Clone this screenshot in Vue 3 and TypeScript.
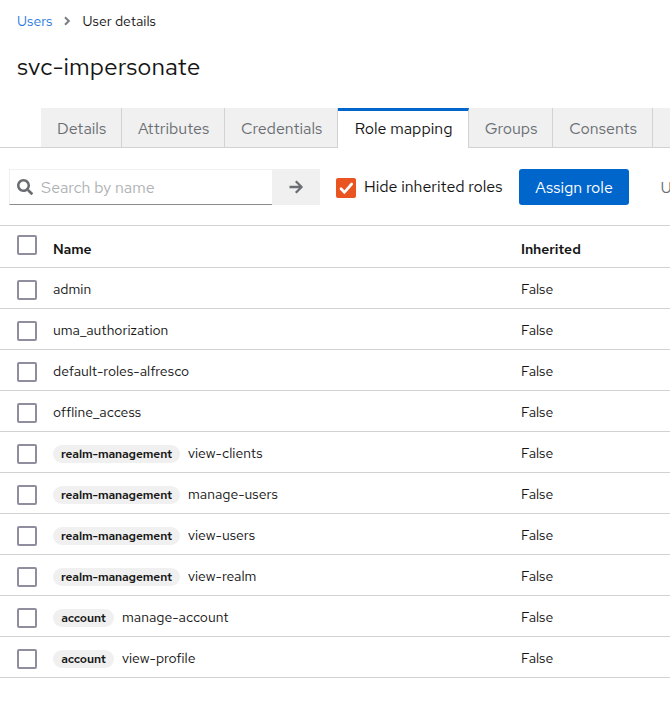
<script setup lang="ts">
import { ref } from 'vue'

interface Tab {
  key: string
  label: string
}

interface Role {
  client?: string
  name: string
  inherited: boolean
}

const tabs: Tab[] = [
  { key: 'details', label: 'Details' },
  { key: 'attributes', label: 'Attributes' },
  { key: 'credentials', label: 'Credentials' },
  { key: 'mapping', label: 'Role mapping' },
  { key: 'groups', label: 'Groups' },
  { key: 'consents', label: 'Consents' },
  { key: 'more', label: '' },
]

const roles: Role[] = [
  { name: 'admin', inherited: false },
  { name: 'uma_authorization', inherited: false },
  { name: 'default-roles-alfresco', inherited: false },
  { name: 'offline_access', inherited: false },
  { client: 'realm-management', name: 'view-clients', inherited: false },
  { client: 'realm-management', name: 'manage-users', inherited: false },
  { client: 'realm-management', name: 'view-users', inherited: false },
  { client: 'realm-management', name: 'view-realm', inherited: false },
  { client: 'account', name: 'manage-account', inherited: false },
  { client: 'account', name: 'view-profile', inherited: false },
]

const activeTab = ref('mapping')
const hideInherited = ref(true)
const search = ref('')
</script>

<template>
  <main class="page">
    <nav class="breadcrumb">
      <a class="crumb-link">Users</a>
      <svg class="chevron" viewBox="0 0 8 10" width="8" height="10">
        <path d="M2 1.2 5.8 5 2 8.8" fill="none" stroke="#7b7f84" stroke-width="2" />
      </svg>
      <span class="crumb">User details</span>
    </nav>

    <h1 class="title">svc-impersonate</h1>

    <div class="tabs">
      <button
        v-for="tab in tabs"
        :key="tab.key"
        class="tab"
        :class="[tab.key, { active: tab.key === activeTab }]"
        @click="activeTab = tab.key"
      >
        {{ tab.label }}
      </button>
    </div>

    <div class="toolbar">
      <div class="search">
        <svg class="search-icon" viewBox="0 0 512 512" width="16" height="16">
          <path
            fill="#6a6e73"
            d="M505 442.700 405.300 343c-4.500-4.500-10.600-7-17-7H372c27.600-35.300 44-79.700 44-128C416 93.100 322.900 0 208 0S0 93.100 0 208s93.100 208 208 208c48.300 0 92.700-16.400 128-44v16.300c0 6.400 2.500 12.500 7 17l99.700 99.700c9.400 9.400 24.600 9.400 33.900 0l28.300-28.300c9.400-9.400 9.400-24.600.1-34zM208 336c-70.700 0-128-57.200-128-128 0-70.700 57.200-128 128-128 70.700 0 128 57.200 128 128 0 70.700-57.200 128-128 128z"
          />
        </svg>
        <input v-model="search" class="search-input" placeholder="Search by name" />
      </div>
      <button class="search-go">
        <svg viewBox="0 0 14 14" width="14" height="14">
          <path d="M0.500 7H12M6.800 1.200 12.600 7 6.800 12.800" fill="none" stroke="#6a6e73" stroke-width="2.300" stroke-linejoin="round" />
        </svg>
      </button>
      <span class="toggle" :class="{ on: hideInherited }" @click="hideInherited = !hideInherited">
        <svg v-if="hideInherited" viewBox="0 0 20 20" width="20" height="20">
          <path d="M5 10.700 8.400 14.300 15.700 6" fill="none" stroke="#fff" stroke-width="2.700" stroke-linecap="round" />
        </svg>
      </span>
      <span class="toggle-label">Hide inherited roles</span>
      <button class="assign">Assign role</button>
      <span class="unassign">U</span>
    </div>

    <div class="table">
      <div class="row head">
        <span class="box"></span>
        <span class="name">Name</span>
        <span class="inherited">Inherited</span>
      </div>
      <div v-for="(role, i) in roles" :key="i" class="row">
        <span class="box"></span>
        <span class="name">
          <span v-if="role.client" class="badge" :class="role.client">{{ role.client }}</span>
          <span>{{ role.name }}</span>
        </span>
        <span class="inherited">{{ role.inherited ? 'True' : 'False' }}</span>
      </div>
    </div>
  </main>
</template>

<style>
body {
  background: #fff;
  overflow: hidden;
}
</style>

<style scoped>
.page {
  width: 670px;
  height: 707px;
  overflow: hidden;
  background: #fff;
  color: #151515;
  font-family: 'Red Hat Text', Inter, 'Noto Sans', sans-serif;
  font-size: 14px;
}

button,
input {
  border: 0;
  padding: 0;
  margin: 0;
  font-family: inherit;
}

.breadcrumb {
  display: flex;
  align-items: center;
  height: 21px;
  padding: 10px 0 1px 17px;
}

.crumb-link {
  width: 46px;
  color: #2b7bdc;
}

.chevron {
  margin-right: 11.5px;
}

.title {
  margin: 17px 0 0 17px;
  height: 35px;
  line-height: 35px;
  font-size: 24.5px;
  font-weight: 450;
}

.tabs {
  display: flex;
  height: 40px;
  margin-top: 24px;
  padding-left: 41px;
  box-shadow: inset 0 -1px #d2d2d2;
}

.tab {
  flex: none;
  box-sizing: border-box;
  height: 40px;
  border-right: 1px solid #d2d2d2;
  border-bottom: 1px solid #d2d2d2;
  padding: 1px 0 0 1.2px;
  background: #f0f0f0;
  color: #6a6e73;
  font-size: 16px;
  font-weight: 400;
  white-space: nowrap;
}

.details { width: 81px; }
.attributes { width: 103px; }
.credentials { width: 113px; }
.mapping { width: 131px; }
.groups { width: 84px; }
.consents { width: 100px; }
.more { width: 100px; }

.tab.active {
  border-top: 3px solid #06c;
  border-bottom: 0;
  padding: 0 0 3px 1.2px;
  background: #fff;
  color: #151515;
}

.toolbar {
  display: flex;
  align-items: center;
  height: 36px;
  padding: 21px 0 20px 9px;
  white-space: nowrap;
}

.search {
  flex: none;
  display: flex;
  align-items: center;
  box-sizing: border-box;
  width: 263px;
  height: 36px;
  padding-left: 7px;
  border: 1px solid #f0f0f0;
  border-right: 0;
  border-bottom-color: #8a8d90;
}

.search-input {
  width: 200px;
  margin-left: 8px;
  outline: 0;
  font-size: 16px;
}

.search-input::placeholder {
  color: #b0b2b5;
  opacity: 1;
}

.search-go {
  flex: none;
  display: flex;
  align-items: center;
  justify-content: center;
  width: 48px;
  height: 36px;
  background: #f0f0f0;
}

.toggle {
  flex: none;
  width: 20px;
  height: 20px;
  margin: 2px 8px 0 16px;
  border-radius: 2px;
}

.toggle.on {
  background: #e95420;
}

.toggle svg {
  display: block;
}

.toggle-label {
  flex: none;
  width: 155px;
  margin-top: -2px;
  font-size: 16px;
}

.assign {
  flex: none;
  width: 110px;
  height: 36px;
  border-radius: 3px;
  background: #06c;
  color: #fff;
  font-size: 16px;
}

.unassign {
  margin-left: 31.5px;
  color: #6a6e73;
  font-size: 16px;
}

.table {
  border-top: 1px solid #d2d2d2;
}

.row {
  display: flex;
  align-items: center;
  box-sizing: border-box;
  height: 41px;
  padding-left: 17px;
  border-bottom: 1px solid #d2d2d2;
}

.head {
  height: 42px;
  font-weight: 600;
  letter-spacing: -0.1px;
}

.box {
  flex: none;
  box-sizing: border-box;
  width: 20px;
  height: 20px;
  margin: 3px 16px 0 0;
  border: 2px solid #908d9e;
  border-radius: 2px;
}

.head .box {
  margin: 0 16px 3px 0;
}

.name {
  display: flex;
  align-items: center;
  width: 468px;
  height: 20px;
  margin-top: 2px;
}

.head .name,
.head .inherited {
  margin-top: 5px;
}

.inherited {
  margin-top: 2px;
}

.badge {
  box-sizing: border-box;
  height: 18px;
  margin: 1px 8px 0 0;
  border-radius: 9px;
  background: #f0f0f0;
  font-size: 12px;
  font-weight: 600;
  letter-spacing: -0.1px;
  line-height: 18px;
  text-align: center;
}

.realm-management { width: 127px; }
.account { width: 61px; }
</style>
